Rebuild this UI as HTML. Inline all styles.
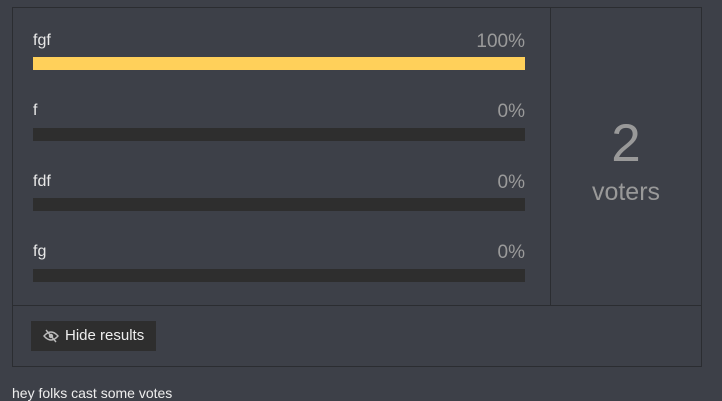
<!DOCTYPE html>
<html><head><style>
body{margin:0;width:722px;height:401px;background:#3d4048;font-family:"Liberation Sans",sans-serif;position:relative;overflow:hidden}
.box{position:absolute;left:12px;top:7px;width:688px;height:358px;border:1px solid #2b2d31}
.vd{position:absolute;left:550px;top:7px;width:1px;height:298px;background:#2b2d31}
.hd{position:absolute;left:12px;top:305px;width:689px;height:1px;background:#2b2d31}
.lbl{position:absolute;left:33px;color:#e8e8e8;font-size:16px}
.pct{position:absolute;right:197px;color:#9a9a9a;font-size:19px}
.bar{position:absolute;left:33px;width:492px;height:13px;background:#2e2e2e}
.n{position:absolute;left:551px;width:150px;text-align:center;color:#999}
.btn{position:absolute;left:31px;top:321px;width:125px;height:30px;background:#2e2e2e;color:#eee;font-size:15px}
.foot{position:absolute;left:12px;top:385px;color:#eee;font-size:14px}
</style></head><body>
<div class="box"></div><div class="vd"></div><div class="hd"></div>
<div class="lbl" style="top:32px">fgf</div><div class="pct" style="top:31px">100%</div><div class="bar" style="top:57px;background:#ffd05a"></div>
<div class="lbl" style="top:102px">f</div><div class="pct" style="top:101px">0%</div><div class="bar" style="top:128px"></div>
<div class="lbl" style="top:173px">fdf</div><div class="pct" style="top:172px">0%</div><div class="bar" style="top:198px"></div>
<div class="lbl" style="top:243px">fg</div><div class="pct" style="top:242px">0%</div><div class="bar" style="top:269px"></div>
<div class="n" style="top:113px;font-size:53px">2</div>
<div class="n" style="top:178px;font-size:25px">voters</div>
<div class="btn"><svg style="position:absolute;left:12px;top:8px" width="16" height="14" viewBox="0 0 16 14"><path d="M1 7Q8 -1 15 7Q8 15 1 7Z" fill="none" stroke="#bbb" stroke-width="1.4"/><circle cx="8" cy="7" r="2.2" fill="#bbb"/><path d="M3 1L13 13" stroke="#bbb" stroke-width="1.4"/></svg><span style="position:absolute;left:34px;top:6px">Hide results</span></div>
<div class="foot">hey folks cast some votes</div>
</body></html>
